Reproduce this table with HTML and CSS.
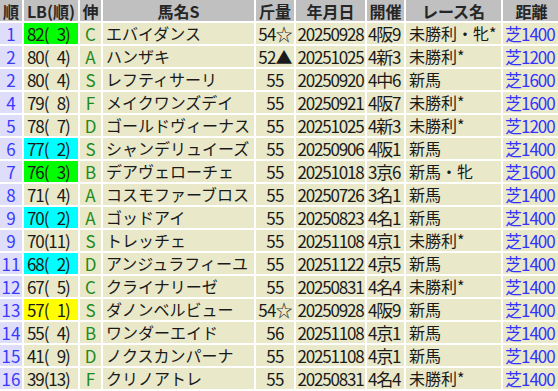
FILE: index.html
```html
<!DOCTYPE html>
<html lang="ja">
<head>
<meta charset="utf-8">
<link rel="stylesheet" href="styles.css">
</head>
<body>
<div class="tbl">
  <div class="row head">
    <div>順</div><div>LB(順)</div><div>伸</div><div>馬名S</div><div>斤量</div><div>年月日</div><div>開催</div><div>レース名</div><div>距離</div>
  </div>
  <div class="row"><div class="no">1</div><div class="lb g">82(&#8199;3)</div><div class="gr">C</div><div class="nm">エバイダンス</div><div class="kg">54☆</div><div class="dt">20250928</div><div class="pl">4阪9</div><div class="rc">未勝利・牝*</div><div class="ds">芝1400</div></div>
  <div class="row"><div class="no">2</div><div class="lb">80(&#8199;4)</div><div class="gr">A</div><div class="nm">ハンザキ</div><div class="kg">52▲</div><div class="dt">20251025</div><div class="pl">4新3</div><div class="rc">未勝利*</div><div class="ds">芝1200</div></div>
  <div class="row"><div class="no">2</div><div class="lb">80(&#8199;4)</div><div class="gr">S</div><div class="nm">レフティサーリ</div><div class="kg">55</div><div class="dt">20250920</div><div class="pl">4中6</div><div class="rc">新馬</div><div class="ds">芝1600</div></div>
  <div class="row"><div class="no">4</div><div class="lb">79(&#8199;8)</div><div class="gr">F</div><div class="nm">メイクワンズデイ</div><div class="kg">55</div><div class="dt">20250921</div><div class="pl">4阪7</div><div class="rc">未勝利*</div><div class="ds">芝1600</div></div>
  <div class="row"><div class="no">5</div><div class="lb">78(&#8199;7)</div><div class="gr">D</div><div class="nm">ゴールドヴィーナス</div><div class="kg">55</div><div class="dt">20251025</div><div class="pl">4新3</div><div class="rc">未勝利*</div><div class="ds">芝1200</div></div>
  <div class="row"><div class="no">6</div><div class="lb c">77(&#8199;2)</div><div class="gr">S</div><div class="nm">シャンデリュイーズ</div><div class="kg">55</div><div class="dt">20250906</div><div class="pl">4阪1</div><div class="rc">新馬</div><div class="ds">芝1400</div></div>
  <div class="row"><div class="no">7</div><div class="lb g">76(&#8199;3)</div><div class="gr">B</div><div class="nm">デアヴェローチェ</div><div class="kg">55</div><div class="dt">20251018</div><div class="pl">3京6</div><div class="rc">新馬・牝</div><div class="ds">芝1600</div></div>
  <div class="row"><div class="no">8</div><div class="lb">71(&#8199;4)</div><div class="gr">A</div><div class="nm">コスモファーブロス</div><div class="kg">55</div><div class="dt">20250726</div><div class="pl">3名1</div><div class="rc">新馬</div><div class="ds">芝1400</div></div>
  <div class="row"><div class="no">9</div><div class="lb c">70(&#8199;2)</div><div class="gr">A</div><div class="nm">ゴッドアイ</div><div class="kg">55</div><div class="dt">20250823</div><div class="pl">4名1</div><div class="rc">新馬</div><div class="ds">芝1400</div></div>
  <div class="row"><div class="no">9</div><div class="lb">70(11)</div><div class="gr">S</div><div class="nm">トレッチェ</div><div class="kg">55</div><div class="dt">20251108</div><div class="pl">4京1</div><div class="rc">未勝利*</div><div class="ds">芝1400</div></div>
  <div class="row"><div class="no">11</div><div class="lb c">68(&#8199;2)</div><div class="gr">D</div><div class="nm">アンジュラフィーユ</div><div class="kg">55</div><div class="dt">20251122</div><div class="pl">4京5</div><div class="rc">新馬</div><div class="ds">芝1400</div></div>
  <div class="row"><div class="no">12</div><div class="lb">67(&#8199;5)</div><div class="gr">C</div><div class="nm">クライナリーゼ</div><div class="kg">55</div><div class="dt">20250831</div><div class="pl">4名4</div><div class="rc">未勝利*</div><div class="ds">芝1400</div></div>
  <div class="row"><div class="no">13</div><div class="lb y">57(&#8199;1)</div><div class="gr">S</div><div class="nm">ダノンベルビュー</div><div class="kg">54☆</div><div class="dt">20250928</div><div class="pl">4阪9</div><div class="rc">新馬</div><div class="ds">芝1400</div></div>
  <div class="row"><div class="no">14</div><div class="lb">55(&#8199;4)</div><div class="gr">B</div><div class="nm">ワンダーエイド</div><div class="kg">56</div><div class="dt">20251108</div><div class="pl">4京1</div><div class="rc">新馬</div><div class="ds">芝1400</div></div>
  <div class="row"><div class="no">15</div><div class="lb">41(&#8199;9)</div><div class="gr">D</div><div class="nm">ノクスカンパーナ</div><div class="kg">55</div><div class="dt">20251108</div><div class="pl">4京1</div><div class="rc">新馬</div><div class="ds">芝1400</div></div>
  <div class="row"><div class="no">16</div><div class="lb">39(13)</div><div class="gr">F</div><div class="nm">クリノアトレ</div><div class="kg">55</div><div class="dt">20250831</div><div class="pl">4名4</div><div class="rc">未勝利*</div><div class="ds">芝1400</div></div>
</div>
</body>
</html>
```
FILE: styles.css
```css
html, body {
  margin: 0;
  padding: 0;
  background: #ffffff;
  overflow: hidden;
}
.tbl {
  display: grid;
  grid-template-columns: 22px 54px 21px 151px 38px 69px 37px 95px 57px;
  grid-auto-rows: 21px;
  gap: 2px;
  font-family: "Noto Sans CJK JP", "Noto Sans", sans-serif;
  font-size: 16px;
  line-height: 21px;
  color: #1a1a1a;
}
.row {
  display: contents;
}
.row > div {
  background: #e9e8c9;
  white-space: pre;
  padding: 0 3px;
}
.head > div {
  background: #c0c0c0;
  text-align: center;
  font-weight: bold;
  font-size: 16px;
  line-height: 19px;
  padding: 2px 0 0;
  color: #262626;
}
.row > .no {
  background: #dedefa;
  color: #3a3aff;
  text-align: center;
  font-size: 17px;
  padding: 0;
}
.row > .lb {
  font-size: 17px;
  letter-spacing: -1.1px;
  padding-left: 3px;
}
.row > .lb.g { background: #00ff00; }
.row > .lb.c { background: #00ffff; }
.row > .lb.y { background: #ffff00; }
.row > .gr {
  color: #1d8a1d;
  text-align: center;
  font-size: 17px;
  padding: 0;
}
.row > .kg {
  text-align: center;
  font-size: 17px;
  letter-spacing: -0.8px;
  padding: 0;
}
.row > .dt {
  text-align: center;
  font-size: 17px;
  letter-spacing: -1.2px;
  padding: 0;
}
.row > .pl {
  font-size: 17px;
  padding: 0 0 0 1px;
  letter-spacing: -1.2px;
}
.row > .rc {
  padding-left: 3px;
}
.row > .ds {
  color: #3333ff;
  font-size: 17px;
  padding-left: 2px;
  letter-spacing: -1px;
}
```
